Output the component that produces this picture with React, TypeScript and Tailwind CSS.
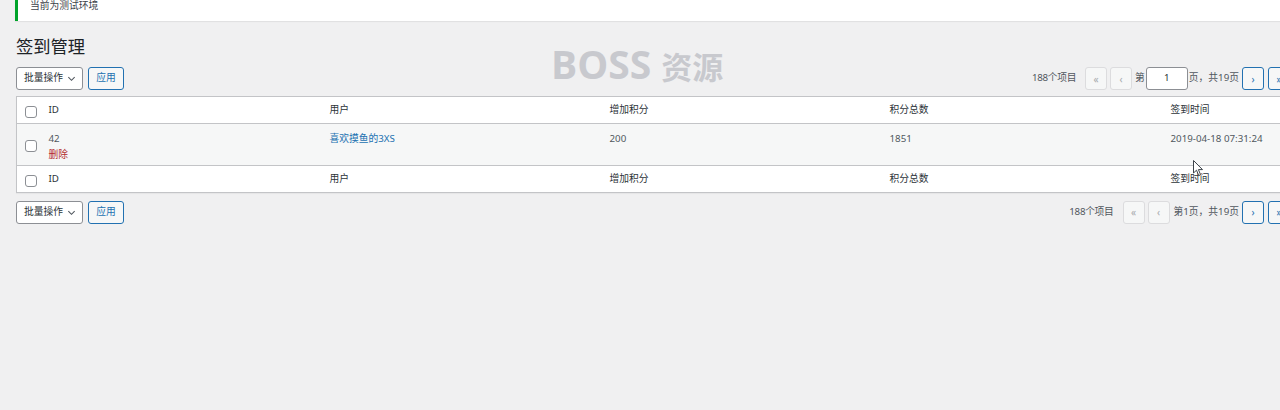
import React from "react";

const font = { fontFamily: '"Noto Sans", "Noto Sans CJK SC", sans-serif' };

function Check() {
  return <span className="inline-block w-[12px] h-[12px] rounded-[3px] border border-[#8c8f94] bg-white align-middle" />;
}

function PageBtn({ label, active }: { label: string; active?: boolean }) {
  return (
    <span
      className={
        "inline-flex items-center justify-center w-[22px] h-[23px] rounded-[3px] border text-[10px] leading-none " +
        (active ? "border-[#2271b1] text-[#2271b1] bg-[#f6f7f7]" : "border-[#dcdcde] text-[#a7aaad] bg-[#f6f7f7]")
      }
    >
      {label}
    </span>
  );
}

function BulkActions() {
  return (
    <div className="flex items-center gap-[5px]">
      <div className="flex items-center h-[23px] w-[67px] rounded-[3px] border border-[#8c8f94] bg-white pl-[7px] text-[9.75px] text-[#2c3338]">
        <span>批量操作</span>
        <svg className="ml-[4px]" width="9" height="9" viewBox="0 0 10 10" fill="none">
          <path d="M1.5 3.5 L5 7 L8.5 3.5" stroke="#50575e" strokeWidth="1.2" />
        </svg>
      </div>
      <div className="flex items-center justify-center h-[23px] w-[36px] rounded-[3px] border border-[#2271b1] bg-[#f6f7f7] text-[9.75px] text-[#2271b1]">
        应用
      </div>
    </div>
  );
}

function TopPager() {
  return (
    <div className="flex items-center text-[9.75px] text-[#50575e]">
      <span className="mr-[9px] tracking-[-0.3px]">188个项目</span>
      <PageBtn label="«" />
      <span className="ml-[3px]">
        <PageBtn label="‹" />
      </span>
      <span className="ml-[3px]">第</span>
      <span className="ml-[1px] inline-flex items-center justify-center w-[42px] h-[23px] rounded-[3px] border border-[#8c8f94] bg-white text-[#2c3338]">
        1
      </span>
      <span className="ml-[1px]">页，共19页</span>
      <span className="ml-[3px]">
        <PageBtn label="›" active />
      </span>
      <span className="ml-[4px]">
        <PageBtn label="»" active />
      </span>
    </div>
  );
}

function BottomPager() {
  return (
    <div className="flex items-center text-[9.75px] text-[#50575e]">
      <span className="mr-[9px] tracking-[-0.3px]">188个项目</span>
      <PageBtn label="«" />
      <span className="ml-[3px]">
        <PageBtn label="‹" />
      </span>
      <span className="ml-[4px]">第1页，共19页</span>
      <span className="ml-[3px]">
        <PageBtn label="›" active />
      </span>
      <span className="ml-[4px]">
        <PageBtn label="»" active />
      </span>
    </div>
  );
}

function HeadRow({ bottom }: { bottom?: boolean }) {
  const b = bottom ? "border-t" : "border-b";
  return (
    <tr className="bg-white">
      <td className={"h-[27px] pl-[8px] border-[#c3c4c7] " + b}>
        <Check />
      </td>
      {["ID", "用户", "增加积分", "积分总数", "签到时间"].map((h) => (
        <td key={h} className={"px-[8px] text-[9.75px] text-[#2c3338] border-[#c3c4c7] " + b}>
          {h}
        </td>
      ))}
    </tr>
  );
}

export default function App() {
  return (
    <div className="relative w-[1280px] h-[410px] overflow-hidden bg-[#f0f0f1]" style={font}>
      <div className="w-[1290px]">
        <div className="ml-[15px] h-[21px] bg-white border-l-[3px] border-[#00a32a] shadow-[0_1px_1px_rgba(0,0,0,0.06)] pl-[12px] text-[9.75px] leading-[12px] text-[#3c434a]">
          当前为测试环境
        </div>

        <div className="ml-[16px] w-[1274px]">
          <h1 className="mt-[14px] text-[17.25px] leading-[24px] text-[#1d2327] font-normal">签到管理</h1>

          <div className="mt-[8px] flex items-center justify-between h-[23px]">
            <BulkActions />
            <TopPager />
          </div>

          <table className="mt-[6px] w-full table-fixed border-collapse border border-[#c3c4c7] bg-white shadow-[0_1px_1px_rgba(0,0,0,0.04)]">
            <colgroup>
              <col className="w-[24px]" />
              <col className="w-[281px]" />
              <col className="w-[280px]" />
              <col className="w-[280px]" />
              <col className="w-[281px]" />
              <col />
            </colgroup>
            <thead>
              <HeadRow />
            </thead>
            <tbody>
              <tr className="bg-[#f6f7f7] align-top">
                <td className="h-[42px] pl-[8px] pt-[8px]">
                  <Check />
                </td>
                <td className="px-[8px] pt-[8px] text-[9.75px] leading-[14px]">
                  <div className="text-[#50575e]">42</div>
                  <div className="text-[#b32d2e] mt-[2px]">删除</div>
                </td>
                <td className="px-[8px] pt-[8px] text-[9.75px] leading-[14px] text-[#2271b1]">喜欢摸鱼的3XS</td>
                <td className="px-[8px] pt-[8px] text-[9.75px] leading-[14px] text-[#50575e]">200</td>
                <td className="px-[8px] pt-[8px] text-[9.75px] leading-[14px] text-[#50575e]">1851</td>
                <td className="px-[8px] pt-[8px] text-[9.75px] leading-[14px] text-[#50575e] whitespace-nowrap">2019-04-18 07:31:24</td>
              </tr>
            </tbody>
            <tfoot>
              <HeadRow bottom />
            </tfoot>
          </table>

          <div className="mt-[8px] flex items-center justify-between h-[22px]">
            <BulkActions />
            <BottomPager />
          </div>
        </div>
      </div>

      <div className="absolute left-[551px] top-[44px] flex items-baseline text-[#c8c9ce] font-bold pointer-events-none">
        <span className="text-[39px] leading-none" style={{ fontFamily: '"Open Sans", sans-serif' }}>BOSS</span>
        <span className="ml-[10px] text-[31px] leading-none" style={{ fontFamily: '"Noto Sans CJK SC", sans-serif' }}>资源</span>
      </div>

      <svg className="absolute left-[1193px] top-[160px]" width="11" height="17" viewBox="0 0 11 17">
        <path d="M0.5 0.5 L0.5 13 L3.5 10.2 L5.7 15.5 L7.6 14.7 L5.4 9.6 L9.5 9.6 Z" fill="#ffffff" stroke="#3c434a" strokeWidth="1" />
      </svg>
    </div>
  );
}
